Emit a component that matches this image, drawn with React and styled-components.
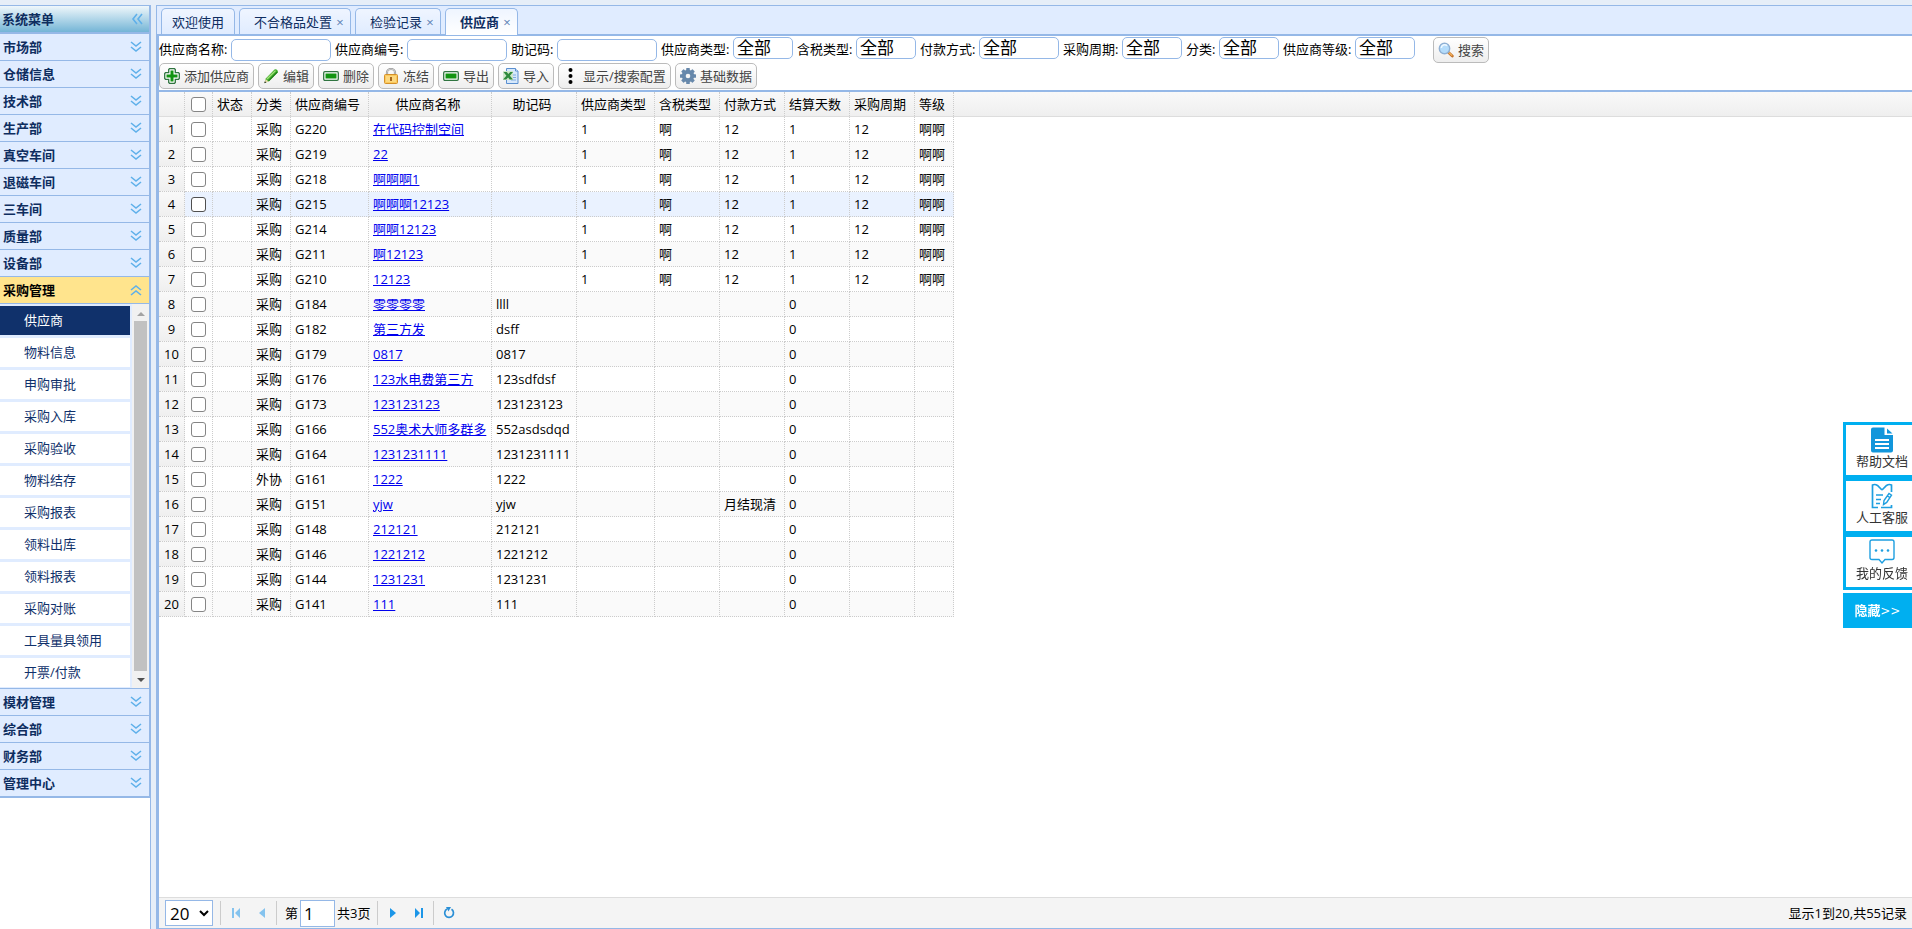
import React, { useState } from "react";
import styled, { createGlobalStyle, css } from "styled-components";

const MENU_TOP = [
  "市场部",
  "仓储信息",
  "技术部",
  "生产部",
  "真空车间",
  "退磁车间",
  "三车间",
  "质量部",
  "设备部",
];
const MENU_BOTTOM = ["模材管理", "综合部", "财务部", "管理中心"];
const SUB_MENU = [
  "供应商",
  "物料信息",
  "申购审批",
  "采购入库",
  "采购验收",
  "物料结存",
  "采购报表",
  "领料出库",
  "领料报表",
  "采购对账",
  "工具量具领用",
  "开票/付款",
];

const TABS = [
  { title: "欢迎使用" },
  { title: "不合格品处置", closable: true },
  { title: "检验记录", closable: true },
  { title: "供应商", closable: true, active: true },
];

const TEXT_FIELDS = ["供应商名称", "供应商编号", "助记码"];
const SELECT_FIELDS = [
  { label: "供应商类型" },
  { label: "含税类型" },
  { label: "付款方式", wide: true },
  { label: "采购周期" },
  { label: "分类" },
  { label: "供应商等级" },
];

const COLUMNS = [
  { title: "状态", width: 39 },
  { title: "分类", width: 39 },
  { title: "供应商编号", width: 78 },
  { title: "供应商名称", width: 123, link: true },
  { title: "助记码", width: 85 },
  { title: "供应商类型", width: 78 },
  { title: "含税类型", width: 65 },
  { title: "付款方式", width: 65 },
  { title: "结算天数", width: 65 },
  { title: "采购周期", width: 65 },
  { title: "等级", width: 39 },
];

const full = (code, name) => ["", "采购", code, name, "", "1", "啊", "12", "1", "12", "啊啊"];
const short = (code, name, mark, kind = "采购", pay = "") => [
  "", kind, code, name, mark, "", "", pay, "0", "", "",
];

const ROWS = [
  full("G220", "在代码控制空间"),
  full("G219", "22"),
  full("G218", "啊啊啊1"),
  full("G215", "啊啊啊12123"),
  full("G214", "啊啊12123"),
  full("G211", "啊12123"),
  full("G210", "12123"),
  short("G184", "零零零零", "llll"),
  short("G182", "第三方发", "dsff"),
  short("G179", "0817", "0817"),
  short("G176", "123水电费第三方", "123sdfdsf"),
  short("G173", "123123123", "123123123"),
  short("G166", "552奥术大师多群多", "552asdsdqd"),
  short("G164", "1231231111", "1231231111"),
  short("G161", "1222", "1222", "外协"),
  short("G151", "yjw", "yjw", "采购", "月结现清"),
  short("G148", "212121", "212121"),
  short("G146", "1221212", "1221212"),
  short("G144", "1231231", "1231231"),
  short("G141", "111", "111"),
];

/* ---------- icons ---------- */

const Chevrons = ({ dir = "down" }) => {
  const paths = {
    down: "M3 3l5 4 5-4M3 8l5 4 5-4",
    up: "M3 8l5-4 5 4M3 13l5-4 5 4",
    left: "M8 3L4 8l4 5M13 3L9 8l4 5",
  };
  return (
    <svg width="16" height="16" viewBox="0 0 16 16" fill="none" stroke="#5fb0ea" strokeWidth="1.6">
      <path d={paths[dir]} />
    </svg>
  );
};

const AddIcon = () => (
  <svg width="16" height="16" viewBox="0 0 16 16">
    <path
      d="M5.500 .7h5l.8.8v3.200h3.200l.8.8v5l-.8.800h-3.200v3.200l-.8.800h-5l-.8-.8v-3.200H1.500l-.8-.8v-5l.8-.8h3.200V1.500z"
      fill="#fff"
      stroke="#2f7440"
      strokeWidth="1.300"
    />
    <path d="M6.500 2.500h3v4h4v3h-4v4h-3v-4h-4v-3h4z" fill="#129412" />
  </svg>
);

const EditIcon = () => (
  <svg width="16" height="16" viewBox="0 0 16 16">
    <path d="M1.500 15l1.300-4.500L11.500 1.600q1.500-.8 2.700.4t.5 2.600L6 13.300z" fill="#3fae2c" />
    <path d="M3.500 10.500l8.500-8.300 1 .9-8.500 8.500z" fill="#a5e07c" />
    <path d="M6 13.300l8.700-8.700-1-.8-8.500 8.600z" fill="#1f7d1a" />
    <path d="M1.500 15l1.200-4 2.800 2.600z" fill="#e8d9a8" />
    <path d="M1.300 15.200l.6-2 1.400 1.400z" fill="#222" />
  </svg>
);

const BarIcon = () => (
  <svg width="16" height="16" viewBox="0 0 16 16">
    <rect x=".7" y="3.700" width="14.600" height="8.600" rx="1.200" fill="#fff" stroke="#2f7440" strokeWidth="1.300" />
    <rect x="2.500" y="5.500" width="11" height="5" fill="#129412" />
  </svg>
);

const LockIcon = () => (
  <svg width="16" height="16" viewBox="0 0 16 16">
    <path d="M4 8V4.500a4 3.500 0 0 1 8 0V8" fill="none" stroke="#9a9a9a" strokeWidth="2.200" />
    <path d="M4 8V4.500a4 3.500 0 0 1 8 0V8" fill="none" stroke="#d8d8d8" strokeWidth=".8" />
    <rect x="1.500" y="6.500" width="13" height="9" rx="1" fill="#fbc95b" stroke="#d4902a" />
    <path d="M3 9h10M3 11h10M3 13h10" stroke="#fde7a6" />
    <path d="M7 9h2v4H7z" fill="#a8681c" />
  </svg>
);

const ExcelIcon = () => (
  <svg width="16" height="16" viewBox="0 0 16 16">
    <path d="M3.500.5h9l2.500 2.500v12.500H3.500z" fill="#d6e8fb" stroke="#5a8fd0" />
    <path d="M9 7h4M9 9.500h4M8 12h5" stroke="#7fabe0" />
    <path d="M12.500.5V3H15" fill="#fff" stroke="#5a8fd0" />
    <path d="M0 3h10v9H0z" fill="#cfe6cb" />
    <path d="M.5 4h3.300l1.500 2 2-2H10L6.900 7.800 10 11.500H6.700L5.100 9.400l-1.900 2.100H0l3.400-3.700z" fill="#2f8a3c" />
  </svg>
);

const DotsIcon = () => (
  <svg width="16" height="16" viewBox="0 0 16 16" fill="#000">
    <circle cx="7.500" cy="2" r="2" />
    <circle cx="7.500" cy="8" r="2" />
    <circle cx="7.500" cy="14" r="2" />
  </svg>
);

const GearIcon = () => (
  <svg width="16" height="16" viewBox="0 0 16 16">
    <g fill="#6788ab">
      <circle cx="8" cy="8" r="6.200" />
      {[0, 45, 90, 135].map((a) => (
        <rect key={a} x="6.200" y="0" width="3.600" height="16" rx=".6" transform={`rotate(${a} 8 8)`} />
      ))}
    </g>
    <circle cx="8" cy="8" r="2.300" fill="#f5f5f5" />
  </svg>
);

const SearchIcon = () => (
  <svg width="16" height="16" viewBox="0 0 16 16">
    <path d="M10 10l4.300 4" stroke="#c4742c" strokeWidth="2.800" strokeLinecap="round" />
    <path d="M11 10.700l2.800 2.600" stroke="#f3b15c" strokeWidth="1.200" strokeLinecap="round" />
    <circle cx="6.500" cy="6.500" r="5.200" fill="#b4dcfb" stroke="#8fb0d4" strokeWidth="1.400" />
    <path d="M3.300 6a3.300 3.300 0 0 1 5.700-2.200" fill="none" stroke="#eef8ff" strokeWidth="1.600" />
  </svg>
);

const PageIcon = ({ kind }) => {
  const shapes = {
    first: <path d="M4 3h2v10H4zM12 3v10L7 8z" />,
    prev: <path d="M11 3v10L5 8z" />,
    next: <path d="M5 3v10l6-5z" />,
    last: <path d="M4 3v10l5-5zM10 3h2v10h-2z" />,
  };
  return (
    <svg width="16" height="16" viewBox="0 0 16 16" fill="currentColor">
      {shapes[kind]}
    </svg>
  );
};

const RefreshIcon = () => (
  <svg width="16" height="16" viewBox="0 0 16 16">
    <path d="M10.500 4.300a4.400 4.400 0 1 1-4.500-.2" fill="none" stroke="#2a8fd6" strokeWidth="1.700" />
    <path d="M5 2h5L7.500 6.500z" fill="#2a8fd6" />
  </svg>
);

const DocIcon = () => (
  <svg width="26" height="26" viewBox="0 0 26 26">
    <path d="M4 .5h11.500V8H24v15.500q0 2-2 2H4q-2 0-2-2v-21q0-2 2-2z" fill="#1296db" />
    <path d="M18 1.500l5.500 5H18z" fill="#1296db" />
    <path d="M6 13h14M6 17h14M6 21h14" stroke="#fff" strokeWidth="1.800" />
  </svg>
);

const ServiceIcon = () => (
  <svg width="26" height="26" viewBox="0 0 26 26" fill="none" stroke="#1e9fe0" strokeWidth="1.700">
    <path d="M13 7L8.500 2.500Q6 .8 3.500 2v22.500H9M13 7l4.500-4.500q2.500-1.700 5-.5V9M12 24.500h10.500V22" />
    <path d="M7 12h7M7 16.500h5M7 20.500h4" />
    <path d="M14.500 21.500l.5-4 5-7 2.500 1.700-4.800 7.200zM18.500 13l2.500 1.700" strokeWidth="1.400" />
  </svg>
);

const FeedbackIcon = () => (
  <svg width="26" height="26" viewBox="0 0 26 26">
    <path
      d="M3 1h20q2 0 2 2v15.500q0 2-2 2h-7L13 24l-3-3.500H3q-2 0-2-2V3q0-2 2-2z"
      fill="none"
      stroke="#1e9fe0"
      strokeWidth="1.400"
    />
    <g fill="#1e9fe0">
      <circle cx="7" cy="11.500" r="1.300" />
      <circle cx="13" cy="11.500" r="1.300" />
      <circle cx="19" cy="11.500" r="1.300" />
    </g>
  </svg>
);

const ACTIONS = [
  { label: "添加供应商", icon: <AddIcon /> },
  { label: "编辑", icon: <EditIcon /> },
  { label: "删除", icon: <BarIcon /> },
  { label: "冻结", icon: <LockIcon /> },
  { label: "导出", icon: <BarIcon /> },
  { label: "导入", icon: <ExcelIcon /> },
  { label: "显示/搜索配置", icon: <DotsIcon /> },
  { label: "基础数据", icon: <GearIcon /> },
];

const HELPERS = [
  { label: "帮助文档", icon: <DocIcon /> },
  { label: "人工客服", icon: <ServiceIcon /> },
  { label: "我的反馈", icon: <FeedbackIcon /> },
];

const App = () => {
  const [checked, setChecked] = useState([]);
  const toggle = (i) =>
    setChecked((list) => (list.includes(i) ? list.filter((x) => x !== i) : [...list, i]));

  return (
    <Page>
      <GlobalStyle />
      <Sidebar>
        <Accordion>
          <SideTitle>
            系统菜单
            <IconButton aria-label="收起菜单">
              <Chevrons dir="left" />
            </IconButton>
          </SideTitle>
          {MENU_TOP.map((name) => (
            <MenuHeader key={name}>
              {name}
              <Chevrons />
            </MenuHeader>
          ))}
          <MenuHeader $open>
            采购管理
            <Chevrons dir="up" />
          </MenuHeader>
          <SubPanel>
            <SubList>
              {SUB_MENU.map((name, i) => (
                <SubItem key={name} href="#" $active={i === 0}>
                  {name}
                </SubItem>
              ))}
            </SubList>
            <ScrollBar>
              <ScrollArrow $up />
              <ScrollThumb />
              <ScrollArrow />
            </ScrollBar>
          </SubPanel>
          {MENU_BOTTOM.map((name) => (
            <MenuHeader key={name}>
              {name}
              <Chevrons />
            </MenuHeader>
          ))}
        </Accordion>
      </Sidebar>

      <Main>
        <TabBar>
          {TABS.map((tab) => (
            <Tab key={tab.title} $active={tab.active} $closable={tab.closable}>
              {tab.title}
              {tab.closable && <Close>×</Close>}
            </Tab>
          ))}
        </TabBar>

        <Content>
          <Toolbar>
            <Filters>
              {TEXT_FIELDS.map((label, i) => (
                <React.Fragment key={label}>
                  <Label htmlFor={`text${i}`} $chars={label.length}>
                    {label}:
                  </Label>
                  <TextBox id={`text${i}`} type="text" />
                </React.Fragment>
              ))}
              {SELECT_FIELDS.map(({ label, wide }, i) => (
                <React.Fragment key={label}>
                  <Label htmlFor={`select${i}`} $chars={label.length}>
                    {label}:
                  </Label>
                  <FilterSelect id={`select${i}`} $wide={wide}>
                    <option>全部</option>
                  </FilterSelect>
                </React.Fragment>
              ))}
              <SearchButton>
                <SearchIcon />
                搜索
              </SearchButton>
            </Filters>
            <Actions>
              {ACTIONS.map(({ label, icon }) => (
                <ToolButton key={label}>
                  {icon}
                  {label}
                </ToolButton>
              ))}
            </Actions>
          </Toolbar>

          <GridArea>
            <HeadStrip>
              <Grid>
                <Cols />
                <thead>
                  <tr>
                    <HeadCell />
                    <HeadCell $check>
                      <Check type="checkbox" aria-label="全选" />
                    </HeadCell>
                    {COLUMNS.map((col) => (
                      <HeadCell key={col.title}>{col.title}</HeadCell>
                    ))}
                  </tr>
                </thead>
              </Grid>
            </HeadStrip>
            <Grid>
              <Cols />
              <tbody>
                {ROWS.map((row, i) => (
                  <Row key={row[2]} $hover={i === 3}>
                    <NumberCell>{i + 1}</NumberCell>
                    <Cell $check>
                      <Check
                        type="checkbox"
                        aria-label={row[2]}
                        $dark={i === 3}
                        checked={checked.includes(i)}
                        onChange={() => toggle(i)}
                      />
                    </Cell>
                    {row.map((value, c) => (
                      <Cell key={c}>
                        {COLUMNS[c].link ? <NameLink href="#">{value}</NameLink> : value}
                      </Cell>
                    ))}
                  </Row>
                ))}
              </tbody>
            </Grid>
          </GridArea>

          <Pager>
            <PageSize aria-label="每页条数">
              <option>20</option>
            </PageSize>
            <Divider />
            <PageButton aria-label="首页" disabled>
              <PageIcon kind="first" />
            </PageButton>
            <PageButton aria-label="上一页" disabled>
              <PageIcon kind="prev" />
            </PageButton>
            <Divider />
            <PageField>
              <label htmlFor="page">第</label>
              <PageInput id="page" type="text" defaultValue="1" />
              <span>共3页</span>
            </PageField>
            <Divider />
            <PageButton aria-label="下一页">
              <PageIcon kind="next" />
            </PageButton>
            <PageButton aria-label="末页">
              <PageIcon kind="last" />
            </PageButton>
            <Divider />
            <PageButton aria-label="刷新">
              <RefreshIcon />
            </PageButton>
            <PagerInfo>显示1到20,共55记录</PagerInfo>
          </Pager>
        </Content>
      </Main>

      <Helpers>
        {HELPERS.map(({ label, icon }) => (
          <HelperItem key={label}>
            {icon}
            {label}
          </HelperItem>
        ))}
        <HideButton>
          隐藏<Arrows>&gt;&gt;</Arrows>
        </HideButton>
      </Helpers>
    </Page>
  );
};

const Cols = () => (
  <colgroup>
    <Col $width={26} />
    <Col $width={28} />
    {COLUMNS.map((col) => (
      <Col key={col.title} $width={col.width} />
    ))}
  </colgroup>
);

const GlobalStyle = createGlobalStyle`
  * {
    box-sizing: border-box;
  }
  body {
    margin: 0;
    background: #fff;
  }
  body, button, input, select {
    font-family: "Open Sans", "Noto Sans CJK SC", sans-serif;
    font-size: 13px;
    line-height: 18px;
  }
  button {
    padding: 0;
    cursor: pointer;
  }
  svg {
    display: block;
    flex: none;
  }
`;

const Page = styled.div`
  display: flex;
  gap: 5px;
  height: 100vh;
  padding-top: 5px;
  background: #e6eef8;
  color: #000;
  overflow: hidden;
`;

const Sidebar = styled.aside`
  width: 151px;
  flex: none;
  background: #fff;
  border-top: 1px solid #95b8e7;
  border-right: 1px solid #95b8e7;
`;

const Accordion = styled.nav`
  border-right: 1px solid #95b8e7;
  border-bottom: 1px solid #95b8e7;
`;

const SideTitle = styled.div`
  display: flex;
  align-items: center;
  justify-content: space-between;
  height: 28px;
  padding: 0 4px 1px 2px;
  border-bottom: 2px solid #95b8e7;
  background: linear-gradient(to bottom, #eff7fb, #74b5d6);
  color: #0e2d5f;
  font-weight: bold;
`;

const IconButton = styled.button`
  border: 0;
  background: none;
`;

const MenuHeader = styled.button`
  display: flex;
  align-items: center;
  justify-content: space-between;
  width: 100%;
  height: 27px;
  padding: 0 5px 0 3px;
  border: 0;
  border-bottom: 1px solid #95b8e7;
  background: ${({ $open }) => ($open ? "#ffe48d" : "#e0ecff")};
  color: ${({ $open }) => ($open ? "#000" : "#0e2d5f")};
  font-weight: bold;
`;

const SubPanel = styled.div`
  display: flex;
  border-bottom: 1px solid #95b8e7;
  background: #e0ecff;
`;

const SubList = styled.div`
  display: flex;
  flex-direction: column;
  flex: 1;
  gap: 3px;
  padding: 2px 2px 1px 0;
`;

const SubItem = styled.a`
  height: 29px;
  padding-left: 24px;
  line-height: 29px;
  text-decoration: none;
  background: ${({ $active }) => ($active ? "#10316b" : "#fff")};
  color: ${({ $active }) => ($active ? "#fff" : "#10316b")};
`;

const ScrollBar = styled.div`
  display: flex;
  flex-direction: column;
  align-items: center;
  justify-content: space-between;
  width: 17px;
  padding: 8px 0 6px;
  background: #f1f1f1;
`;

const ScrollArrow = styled.span`
  border: 4px solid transparent;
  ${({ $up }) =>
    $up
      ? css`
          border-top: 0;
          border-bottom-color: #a3a3a3;
        `
      : css`
          border-bottom: 0;
          border-top-color: #505050;
        `}
`;

const ScrollThumb = styled.span`
  flex: 1;
  width: 13px;
  margin: 5px 0 7px;
  background: #c1c1c1;
`;

const Main = styled.main`
  display: flex;
  flex-direction: column;
  flex: 1;
  min-width: 0;
  border-top: 1px solid #95b8e7;
  border-left: 1px solid #95b8e7;
`;

const TabBar = styled.div`
  display: flex;
  gap: 4px;
  height: 30px;
  padding: 2px 4px 0;
  border-bottom: 2px solid #95b8e7;
  background: #e0ecff;
`;

const Tab = styled.button`
  display: flex;
  align-items: center;
  gap: 4px;
  height: ${({ $active }) => ($active ? "27px" : "26px")};
  padding: ${({ $closable }) => ($closable ? "0 6px 0 14px" : "0 10px")};
  border: 1px solid #95b8e7;
  border-bottom: 0;
  border-radius: 5px 5px 0 0;
  background: linear-gradient(to bottom, #eff5ff, ${({ $active }) => ($active ? "#fff" : "#e0ecff")});
  color: #0e2d5f;
  font-weight: ${({ $active }) => ($active ? "bold" : "normal")};
`;

const Close = styled.span`
  width: 8px;
  color: #5a82b4;
  font-weight: normal;
`;

const Content = styled.section`
  display: flex;
  flex-direction: column;
  flex: 1;
  min-height: 0;
  border: 1px solid #95b8e7;
  border-width: 0 0 1px 2px;
  background: #fff;
`;

const Toolbar = styled.div`
  padding: 1px 0;
  border-bottom: 2px solid #95b8e7;
`;

const Filters = styled.div`
  display: flex;
  align-items: flex-start;
  gap: 4px;
  height: 26px;
`;

const Label = styled.label`
  flex: none;
  width: ${({ $chars }) => $chars * 13 + 3}px;
  line-height: 24px;
  white-space: nowrap;
`;

const field = css`
  border: 1px solid #95b8e7;
  background: #fff;
  color: #000;
`;

const TextBox = styled.input`
  ${field}
  width: 100px;
  height: 22px;
  margin-top: 2px;
  padding: 0 4px;
  border-radius: 5px;
`;

const FilterSelect = styled.select`
  ${field}
  width: ${({ $wide }) => ($wide ? "80px" : "60px")};
  height: 22px;
  padding: 0 3px;
  border-radius: 5px;
  appearance: none;
  font-size: 17px;
  line-height: 20px;
`;

const Actions = styled.div`
  display: flex;
  gap: 4px;
`;

const ToolButton = styled.button`
  display: flex;
  align-items: center;
  gap: 4px;
  height: 26px;
  padding: 0 4px;
  border: 1px solid #bbb;
  border-radius: 5px;
  background: linear-gradient(to bottom, #fff, #eee);
  color: #444;
  white-space: nowrap;
`;

const SearchButton = styled(ToolButton)`
  margin-left: 14px;
`;

const GridArea = styled.div`
  flex: 1;
  min-height: 0;
  overflow: hidden;
`;

const HeadStrip = styled.div`
  border-bottom: 1px solid #ddd;
  background: linear-gradient(to bottom, #f9f9f9, #efefef);
`;

const Grid = styled.table`
  width: 795px;
  table-layout: fixed;
  border-collapse: separate;
  border-spacing: 0;
`;

const Col = styled.col`
  width: ${({ $width }) => $width}px;
`;

const HeadCell = styled.th`
  height: 24px;
  padding: ${({ $check }) => ($check ? "0 6px" : "0 8px 0 4px")};
  border-right: 1px dotted #ccc;
  font-weight: normal;
  white-space: nowrap;
`;

const Cell = styled.td`
  height: 25px;
  padding: 0 ${({ $check }) => ($check ? "6px" : "4px")};
  border-right: 1px dotted #ccc;
  border-bottom: 1px dotted #ccc;
  white-space: nowrap;
`;

const NumberCell = styled(Cell)`
  padding: 0;
  background: linear-gradient(to bottom, #f9f9f9, #efefef);
  text-align: center;
`;

const Row = styled.tr`
  background: ${({ $hover }) => ($hover ? "#eaf2ff" : "#fff")};
  &:nth-child(even) {
    background: ${({ $hover }) => ($hover ? "#eaf2ff" : "#fafafa")};
  }
`;

const Check = styled.input`
  display: block;
  width: 15px;
  height: 15px;
  margin: 0;
  border: 1px solid ${({ $dark }) => ($dark ? "#4f4f4f" : "#858585")};
  border-radius: 3px;
  appearance: none;
  background: #fff;
  &:checked {
    background: #0075ff;
  }
`;

const NameLink = styled.a`
  color: #00e;
`;

const Pager = styled.footer`
  display: flex;
  align-items: center;
  height: 31px;
  padding: 0 5px 0 6px;
  border-top: 1px solid #ddd;
  background: #f4f4f4;
`;

const PageSize = styled.select`
  ${field}
  width: 48px;
  height: 26px;
  margin-right: 6px;
  font-size: 17px;
  line-height: 24px;
`;

const Divider = styled.span`
  width: 1px;
  height: 24px;
  margin: 0 2px 0 1px;
  background: #ccc;
`;

const PageButton = styled.button`
  display: flex;
  align-items: center;
  justify-content: center;
  width: 26px;
  height: 26px;
  border: 0;
  background: none;
  color: #1c96e8;
  &:disabled {
    color: #85c3ee;
  }
`;

const PageField = styled.div`
  display: flex;
  align-items: center;
  gap: 2px;
  padding: 0 6px;
`;

const PageInput = styled.input`
  ${field}
  width: 35px;
  height: 27px;
  padding: 0 3px;
  font-size: 17px;
`;

const PagerInfo = styled.span`
  margin-left: auto;
`;

const Helpers = styled.div`
  position: fixed;
  top: 422px;
  right: 0;
  display: flex;
  flex-direction: column;
  width: 69px;
`;

const HelperItem = styled.button`
  display: flex;
  flex-direction: column;
  align-items: center;
  height: 56px;
  padding: 2px 0 0 6px;
  border: 3px solid #00aff0;
  border-right: 0;
  background: #fff;
  color: #333;
  line-height: 16px;
`;

const HideButton = styled.button`
  height: 35px;
  margin-top: 3px;
  border: 0;
  background: #00aff0;
  color: #fff;
  font-weight: bold;
`;

const Arrows = styled.span`
  font-family: "DejaVu Sans", sans-serif;
  font-size: 12px;
  font-weight: normal;
`;

export default App;
